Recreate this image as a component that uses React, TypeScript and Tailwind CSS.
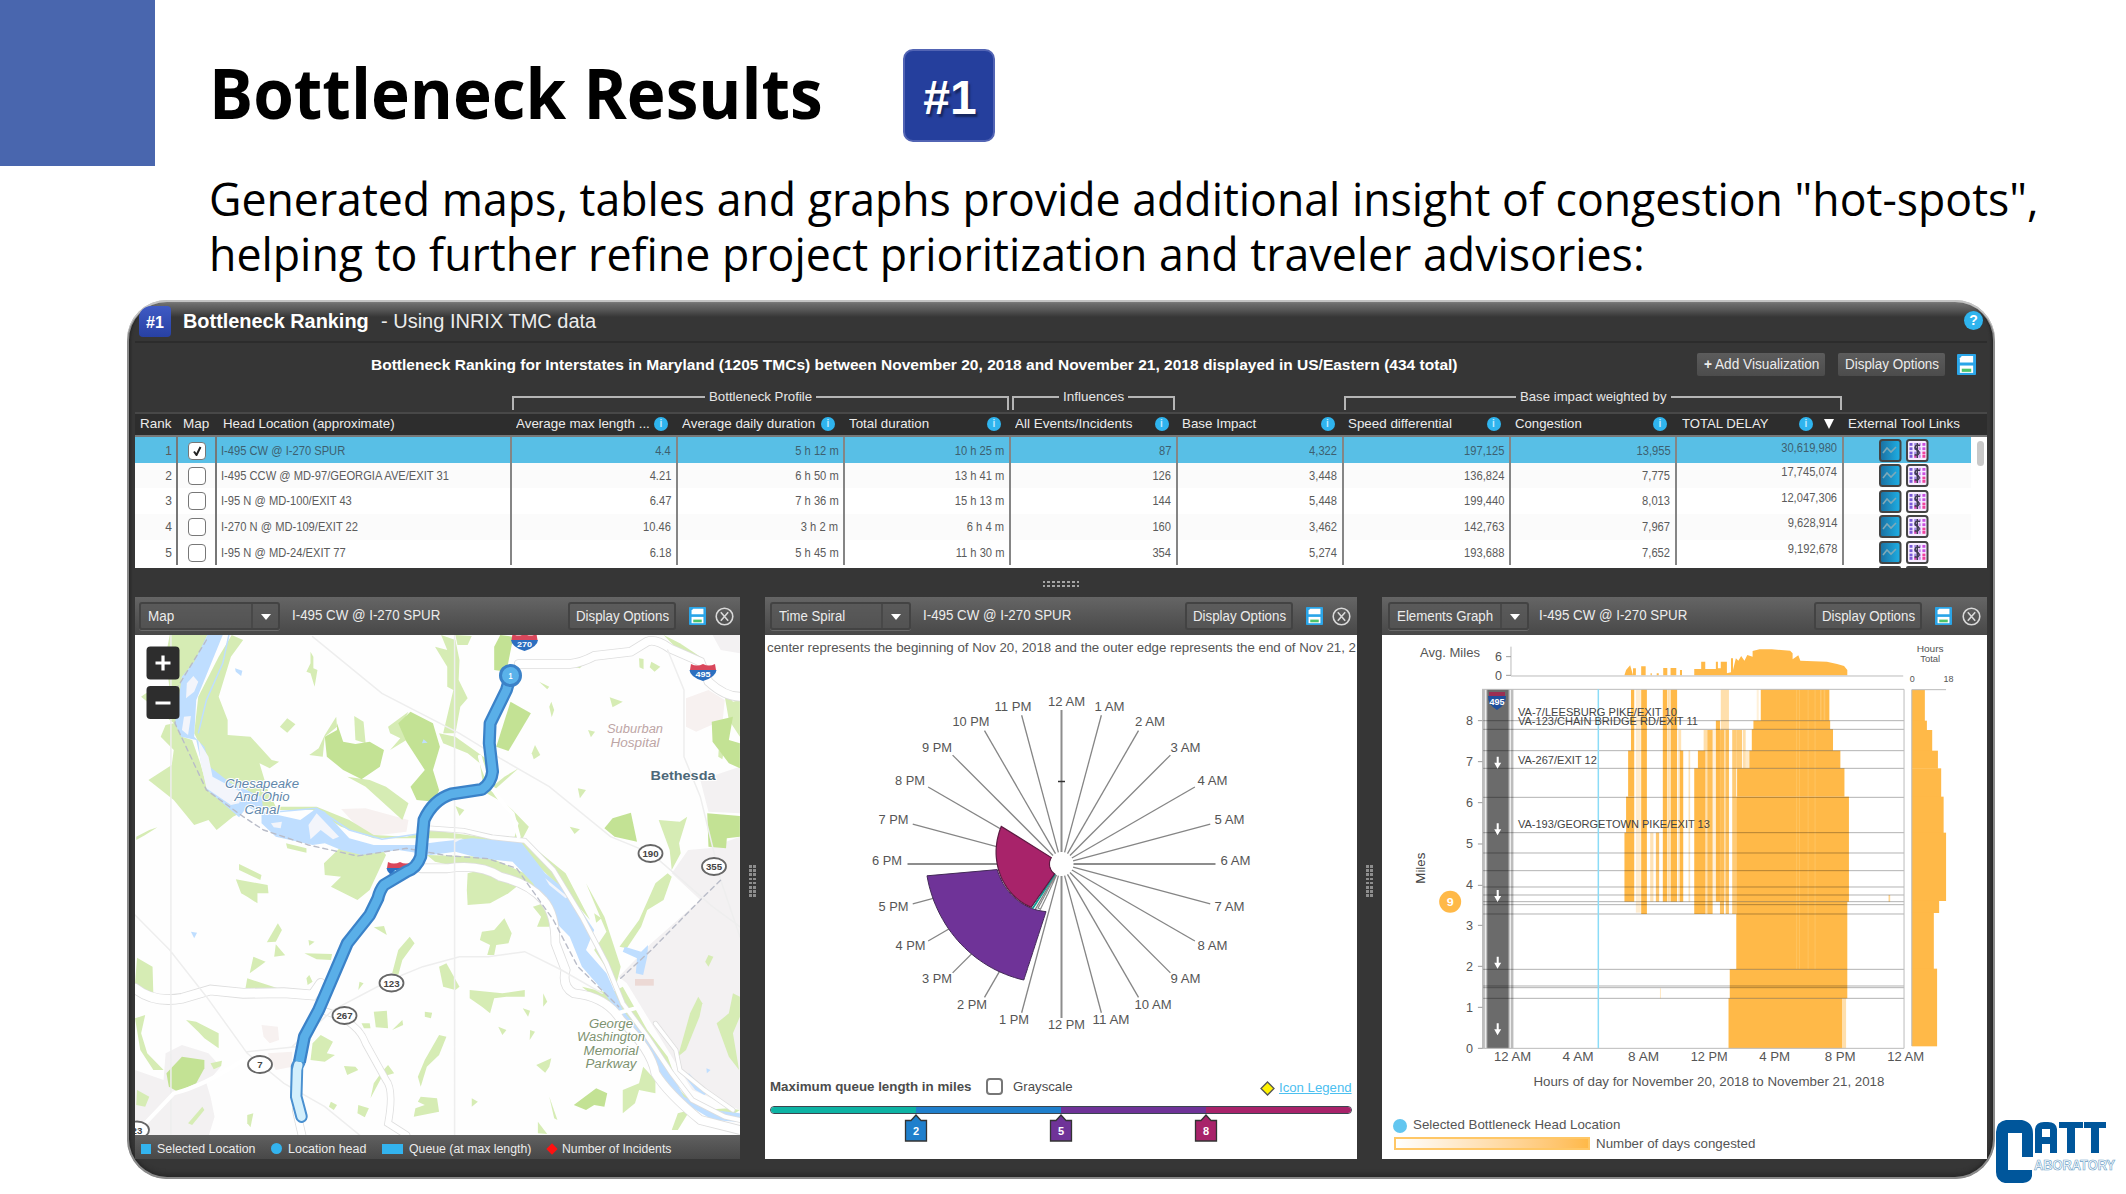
import React, { useLayoutEffect, useRef, useState } from "react";

/** Text squeezed or stretched horizontally to an exact width. */
function Fit({ w, children, className = "" }: { w: number; children: React.ReactNode; className?: string }) {
  const ref = useRef<HTMLSpanElement>(null);
  const [scale, setScale] = useState(1);
  useLayoutEffect(() => {
    if (ref.current) setScale(w / ref.current.offsetWidth);
  }, [w]);
  return (
    <span className={"block shrink-0 text-left " + className} style={{ width: w }}>
      <span ref={ref} className="inline-block origin-left whitespace-nowrap" style={{ transform: `scaleX(${scale})` }}>
        {children}
      </span>
    </span>
  );
}

const Info = ({ className = "" }: { className?: string }) => (
  <span className={"flex h-[14px] w-[14px] shrink-0 items-center justify-center rounded-full bg-[#2fb4ee] text-[10px] font-bold leading-none text-[#bfeaff] " + className}>i</span>
);

const DocIcon = ({ className }: { className: string }) => (
  <svg className={className} viewBox="0 0 20 20" preserveAspectRatio="none">
    <rect width="20" height="20" rx="1" fill="#2aa5e8" />
    <path d="M5 2H17V8H3V4Z" fill="#fff" />
    <rect x="3" y="11" width="14" height="7" fill="#fff" />
    <rect x="5" y="14" width="10" height="3" fill="#4cc46a" />
  </svg>
);

const CloseIcon = () => (
  <svg className="h-[19px] w-[19px]" viewBox="0 0 19 19" fill="none" stroke="#d8d8d8" strokeWidth="1.6">
    <circle cx="9.5" cy="9.5" r="8.3" />
    <path d="M5.8 5.2L13.2 13.8M13.2 5.2L5.8 13.8" />
  </svg>
);

const GRID = "grid grid-cols-[43px_38.5px_295px_166px_167.5px_166px_166.5px_166px_167px_166.5px_166.5px_127px_17px]";

const HEADS: [string, number, number][] = [
  ["Average max length ...", 134, 9.5],
  ["Average daily duration", 133, 10],
  ["Total duration", 80, 10],
  ["All Events/Incidents", 117, 9],
  ["Base Impact", 74, 9],
  ["Speed differential", 104, 10],
  ["Congestion", 67, 10],
];

const ROWS = [
  ["1", "I-495 CW @ I-270 SPUR", "4.4", "5 h 12 m", "10 h 25 m", "87", "4,322", "197,125", "13,955", "30,619,980"],
  ["2", "I-495 CCW @ MD-97/GEORGIA AVE/EXIT 31", "4.21", "6 h 50 m", "13 h 41 m", "126", "3,448", "136,824", "7,775", "17,745,074"],
  ["3", "I-95 N @ MD-100/EXIT 43", "6.47", "7 h 36 m", "15 h 13 m", "144", "5,448", "199,440", "8,013", "12,047,306"],
  ["4", "I-270 N @ MD-109/EXIT 22", "10.46", "3 h 2 m", "6 h 4 m", "160", "3,462", "142,763", "7,967", "9,628,914"],
  ["5", "I-95 N @ MD-24/EXIT 77", "6.18", "5 h 45 m", "11 h 30 m", "354", "5,274", "193,688", "7,652", "9,192,678"],
];

const ToolIcons = () => (
  <svg className="h-[23px] w-[50px]" viewBox="0 0 50 23">
    <defs>
      <linearGradient id="tb" x1="0" x2="1"><stop offset="0" stopColor="#1b6fa0" /><stop offset="1" stopColor="#1eb0e6" /></linearGradient>
    </defs>
    <rect x="1" y="1" width="20.5" height="21" rx="2.5" fill="url(#tb)" stroke="#444" strokeWidth="2" />
    <path d="M4 14L8 9L12 13L17 8" fill="none" stroke="#7fa9b8" strokeWidth="1.6" />
    <rect x="28" y="1" width="20.5" height="21" rx="2.5" fill="#f6ecff" stroke="#444" strokeWidth="2" />
    {[4, 8.3, 12.6, 16].map((y, i) => (
      <g key={y}>
        <rect x="30.5" y={y} width="3" height="2.8" fill="#7a5ad8" />
        <rect x="35.2" y={y} width="2.4" height="2.8" fill={i > 2 ? "#d23bb0" : "#a38be8"} />
        <rect x="39.6" y={y} width="2.2" height="2.8" fill="#c78bf0" />
        <rect x="43.4" y={y} width="3" height="2.8" fill={i > 1 ? "#f0429e" : "#c94fe0"} />
      </g>
    ))}
    <path d="M41 6.5C36 4.5 34.5 9 38 11C42 13 40 17.5 35.5 15.5M38.3 4V19" fill="none" stroke="#3f3a52" strokeWidth="1.5" />
  </svg>
);

function Group({ width, label, lw, className }: { width: string; label: string; lw: number; className: string }) {
  return (
    <div className={"flex h-[15px] items-start " + width + " " + className}>
      <span className="mt-[7px] h-[14px] flex-1 border-l-2 border-t-2 border-[#b5b5b5]" />
      <Fit w={lw} className="mx-[4px] text-[13px] leading-[15px] text-[#e6e6e6]">{label}</Fit>
      <span className="mt-[7px] h-[14px] flex-1 border-r-2 border-t-2 border-[#b5b5b5]" />
    </div>
  );
}

function PanelHead({ name, nw, box, arrow, tgap, btnGap, iconGap }: { name: string; nw: number; box: string; arrow: string; tgap: string; btnGap: string; iconGap: string }) {
  return (
    <div className="flex h-[38px] shrink-0 items-center bg-gradient-to-b from-[#656565] to-[#484848] pr-[6px] text-[14px] text-[#ececec]">
      <div className={"flex h-[28px] rounded-[3px] border-2 border-[#434343] bg-[#575757]/60 shadow-[0_1px_0_#6a6a6a] " + box}>
        <div className="flex flex-1 items-center pl-[7px]"><Fit w={nw} className="leading-[18px]">{name}</Fit></div>
        <div className={"flex items-center justify-center border-l-2 border-[#484848] " + arrow}>
          <span className="mt-0.5 border-x-[5.5px] border-t-[6px] border-x-transparent border-t-white" />
        </div>
      </div>
      <Fit w={148.5} className={"-mt-[2px] leading-[18px] " + tgap}>I-495 CW @ I-270 SPUR</Fit>
      <div className={"ml-auto flex h-[28px] w-[108px] items-center justify-center rounded-[3px] border-2 border-[#434343] bg-[#5a5a5a]/60 " + btnGap}>
        <Fit w={93} className="leading-[18px]">Display Options</Fit>
      </div>
      <DocIcon className={"h-[18px] w-[17px] " + iconGap} />
      <CloseIcon />
    </div>
  );
}

const Grip = () => (
  <div className="mt-[6px] grid grid-cols-2 gap-[1.5px]">
    {Array.from({ length: 16 }, (_, i) => <span key={i} className="h-[2.7px] w-[2.7px] bg-[#8d8d8d]" />)}
  </div>
);

/** Width-fitted svg label. */
const T = ({ x, y, w, s = 12, a = "start", c = "#444", i = false, b = false, children }: { x: number; y: number; w: number; s?: number; a?: "start" | "middle" | "end"; c?: string; i?: boolean; b?: boolean; children: string }) => (
  <text x={x} y={y} textLength={w} lengthAdjust="spacingAndGlyphs" fontSize={s} textAnchor={a} fill={c} fontStyle={i ? "italic" : "normal"} fontWeight={b ? 700 : 400}>{children}</text>
);

const LIGHT = [
  "M120 135L212 135L185 215L150 260L140 400L150 440L175 450L195 520L212 595L250 630L300 665L275 680L235 720L215 690L180 705L130 630L68 570L125 525L130 480L98 440L110 405L130 400L50 320L62 310L120 300L110 200Z",
  "M272 135L300 150L270 200L240 320L262 390L262 435L318 440L370 510L388 515L365 535L340 520L350 560L360 600L380 650L480 650L560 690L620 735L700 740L760 720L880 740L965 740L975 700L940 640L890 605L880 520L850 490L790 460L780 430L820 440L900 510L905 600L960 660L1000 710L985 745L1040 800L1090 850L1150 990L1100 920L1000 800L960 755L800 745L620 745L540 710L470 660L345 660L310 600L230 560L200 480L180 430L190 320L240 200Z",
  "M785 135L800 180L770 170L800 230L800 290L815 300L790 430L820 430L832 350L850 325L828 270L830 210L820 150Z",
  "M820 135L860 138L850 165L825 165Z",
  "M465 185L472 200L472 235L482 240L475 290L465 250L455 245L465 220Z",
  "M408 385L428 403L408 428L390 410Z",
  "M528 380L530 410L500 440L495 500L462 495L485 475L500 435Z",
  "M572 378L595 395L600 460L575 450Z",
  "M705 365L655 410L660 430L685 445L660 480L700 450L690 400Z",
  "M555 560L600 590L690 690L705 640L650 590L610 570Z",
  "M1015 465L1028 495L1012 508L1007 490Z", "M1055 335L1062 360L1056 382L1050 350Z",
  "M1300 215L1322 230L1308 245L1296 232Z", "M1270 205L1281 207L1281 238L1271 232Z", "M1198 322L1230 335L1205 352Z",
  "M1118 220L1132 225L1125 235L1112 232Z", "M1025 275L1050 290L1045 298Z", "M1145 420L1162 425L1152 442Z",
  "M975 535L940 560L910 590L920 595Z", "M1120 595L1140 600L1125 625Z", "M1100 710L1125 718L1112 732Z", "M820 648L842 660L830 678Z",
  "M1330 135L1370 160L1420 200L1420 230L1390 210Z", "M1440 270L1480 300L1500 335L1517 330L1517 440L1490 390L1480 320Z",
  "M1465 480L1477 490L1474 508L1464 500Z", "M1318 690L1370 695L1388 680L1368 760L1372 790L1350 840L1345 780Z",
  "M1340 850L1310 880L1270 990L1240 1040L1222 1070L1240 1075L1275 1010L1290 960L1330 930L1350 860Z",
  "M540 770L640 780L650 795L610 900L580 930L515 890L540 860L500 855L498 820Z",
  "M405 760L455 775L455 788L408 775Z", "M290 822L345 855L342 870L290 840Z", "M282 868L360 885L362 910L335 910L335 940L310 920L295 910Z",
  "M750 795L900 800L990 850L1060 930L1120 990L1130 1005L1075 990L1010 900L900 850L770 815Z",
  "M850 850L900 835L985 875L950 910L905 940L850 945L848 900Z", "M1010 950L1060 930L1050 1010L1020 1010L1030 980Z",
  "M940 985L958 1030L950 1060L920 1065L915 1095L898 1095L905 1065L880 1050L885 1025L915 1020Z",
  "M708 1040L720 1060L690 1110L680 1155L665 1150L680 1080Z",
  "M385 1000L395 1020L380 1055L358 1057Z", "M380 1063L403 1096L376 1100Z", "M325 1100L355 1115L316 1150Z",
  "M450 1090L518 1092L515 1110L480 1108Z", "M620 1012L645 1008L652 1035Z", "M460 1050L475 1055L462 1067Z", "M462 1155L470 1175L458 1185L455 1165Z",
  "M40 1103L78 1130L80 1215L48 1190L35 1180Z", "M310 1165L385 1195L305 1200Z",
  "M160 1290L185 1295L240 1330L240 1375L205 1345L190 1325Z", "M35 1285L60 1275L50 1330L65 1390L105 1440L80 1440L48 1380Z",
  "M220 1420L248 1412L246 1428L228 1438Z", "M490 1335L520 1355L505 1390L525 1395L500 1415L465 1410L470 1360Z",
  "M620 1265L652 1262L655 1315L625 1312Z", "M690 1290L692 1305L665 1320Z", "M590 1300L610 1300L612 1315L596 1315Z", "M585 1175L595 1180L582 1200Z",
  "M798 1120L830 1190L820 1200L790 1190L780 1130Z", "M855 1200L935 1210L990 1200L990 1220L945 1220L915 1225L905 1270L885 1250L855 1225Z",
  "M1035 1210L1045 1235L1035 1250Z", "M925 1310L945 1320L935 1335Z", "M985 1255L1003 1262L998 1280Z", "M1003 1320L1015 1325L1002 1350Z", "M745 1265L763 1268L760 1285L745 1280Z",
  "M780 1335L798 1340L780 1395L750 1430L735 1490L728 1460L745 1410Z", "M1055 1405L1050 1430L1040 1448L1018 1425Z",
  "M655 1425L670 1450L640 1460L612 1525L620 1480L640 1445Z", "M735 1520L775 1525L780 1565L718 1580L722 1555L745 1545L728 1535Z",
  "M575 1430L582 1440L555 1455L547 1428Z", "M582 1545L608 1555L598 1582L580 1570Z", "M515 1535L530 1545L522 1560L510 1550Z", "M860 1525L875 1535L860 1550Z",
  "M200 1550L205 1560L175 1605L165 1600Z", "M40 1500L70 1520L60 1550L38 1545Z", "M310 1575L325 1570L318 1612L310 1600Z",
  "M1130 1190L1200 1210L1220 1260L1180 1240Z", "M1230 1190L1290 1320L1340 1400L1370 1500L1420 1560L1490 1555L1517 1560L1480 1590L1410 1560L1350 1500L1320 1380L1240 1300L1200 1210Z",
  "M1280 1430L1310 1470L1310 1510L1270 1500L1260 1540L1230 1570L1230 1500L1270 1480Z",
  "M1415 1220L1425 1240L1418 1280L1385 1380L1365 1400L1395 1270Z", "M1500 1210L1517 1220L1517 1280L1500 1330L1515 1440L1490 1400L1460 1300L1490 1270Z", "M1440 1095L1452 1100L1440 1130L1432 1115Z",
  "M1022 1595L1045 1632L1022 1630Z", "M1365 1570L1395 1560L1365 1620L1350 1620Z", "M1050 1520L1070 1590L1062 1585Z", "M1190 1025L1140 880L1185 980L1225 1130L1215 1180L1160 1080Z", "M1160 970L1178 985L1165 998Z",
  "M38 740L70 720L90 712L60 735L38 750Z",
];
const MID = [
  "M930 135L962 140L945 245L915 240L915 170Z", "M955 335L1005 370L950 483L920 470Z",
  "M530 400L545 455L575 462L610 455L645 480L635 530L590 568L545 540L505 500L500 440L530 420Z",
  "M710 365L765 400L782 470L765 540L780 600L770 635L725 630L710 590L745 540L700 455L680 400Z",
  "M1250 668L1265 755L1210 740L1185 715L1205 685Z", "M1448 395L1500 380L1490 450L1517 460L1517 535L1490 520L1450 455Z", "M1437 670L1517 678L1517 740L1485 745L1483 775L1440 770Z",
  "M150 1400L205 1410L205 1435L185 1480L140 1505L118 1490L112 1450Z", "M1165 1495L1192 1510L1185 1550L1160 1545L1140 1560L1110 1545Z",
];
const BLUE_BITS = ["M280 235L298 242L295 258L282 245Z", "M742 448L752 458L738 460Z", "M172 1025L187 1028L180 1045Z", "M1235 1070L1275 1085L1292 1065L1290 1100L1280 1155L1262 1150L1265 1105L1230 1085Z", "M1392 1450L1438 1510L1430 1515L1408 1500L1385 1465Z", "M1435 1435L1445 1440L1436 1450Z"];

const Shield = ({ x, y, n }: { x: number; y: number; n: string }) => (
  <g transform={`translate(${x} ${y})`}>
    <path d="M-12 -8Q-6 -5 0 -8Q6 -5 12 -8L13 -2H-13Z" fill="#d9475b" />
    <path d="M-13.500 -2H13.500Q13 5 0 9Q-13 5 -13.500 -2Z" fill="#2c6fc0" />
    <T x={0} y={5} w={15} s={8} a="middle" c="#fff" b>{n}</T>
  </g>
);
const Pill = ({ x, y, n }: { x: number; y: number; n: string }) => (
  <g>
    <ellipse cx={x} cy={y} rx={12} ry={8.5} fill="#fff" stroke="#666" strokeWidth="1.8" />
    <T x={x} y={y + 3.5} w={n.length * 5.4} s={9.5} a="middle" c="#444" b>{n}</T>
  </g>
);

const ROUTE = "M955 257L945 300L905 400L903 460L911 545Q908 580 885 598L810 612Q765 630 743 690L735 800Q725 835 700 845L645 885Q635 900 630 925L610 975L555 1060L485 1260L450 1340L438 1415";

function MapView() {
  return (
    <svg className="block h-[500px] w-[605px] bg-[#fefefe]" viewBox="0 0 605 500">
      <g transform="scale(.40816 .33333) translate(-35 -135)">
        <path d="M1450 135H1517V190L1470 180ZM1420 570L1517 530V670L1440 665ZM1350 850L1390 780L1440 775L1517 740V1560L1400 1500L1330 1360L1240 1180L1220 1160L1300 1060L1420 930ZM35 1440L105 1470L110 1390L150 1365L215 1390L245 1430L210 1480L220 1520L230 1580L215 1640H35Z" fill="#f3f1f2" />
        <path d="M1385 325L1440 300L1480 330L1475 390L1410 425L1385 410ZM540 657L600 655L705 690L700 725L620 737L580 710ZM345 1305L385 1310L388 1350L365 1360L350 1340ZM360 1390L420 1385L420 1430L380 1440Z" fill="#f7f1f0" />
        <path d="M1260 1167H1306V1187H1260Z" fill="#ecd9d5" />
        {LIGHT.map((d) => <path key={d} d={d} fill="#d6ecb4" />)}
        {MID.map((d) => <path key={d} d={d} fill="#c3e294" />)}
        <path d="M212 135L250 135L215 240L185 330L180 440L205 470L218 530L270 580L345 620L350 665L440 690L480 655L500 665L560 745L620 765L720 765L780 755L860 745L980 755L1040 850L1100 910L1160 1020L1140 1080L1190 1150L1230 1260L1290 1350L1340 1430L1380 1520L1450 1560L1517 1570L1517 1596L1450 1590L1370 1530L1320 1470L1300 1390L1225 1280L1180 1200L1130 1130L1100 1040L1060 990L1010 880L960 815L880 805L820 785L760 795L680 780L590 795L540 780L500 760L470 765L380 740L345 700L345 672L310 650L290 682L212 600L185 450L148 440L133 400L150 260L180 215Z" fill="#bfdeff" />
        {BLUE_BITS.map((d) => <path key={d} d={d} fill="#bfdeff" />)}
        <path d="M178 258L190 275L180 305L160 325L162 280ZM155 380L172 378L165 435L150 420ZM190 450L215 500L225 560L300 610L290 640L270 645L210 595L195 510ZM480 670L535 740L520 748L490 720L465 748L460 705ZM368 700L395 695L392 715L375 712ZM815 748L838 745L820 757ZM1040 865L1095 920L1090 925L1050 885Z" fill="#f3f5fb" />
        <path d="M265 135L250 220L210 330L190 430M385 665L480 655L560 720L640 748L740 730" fill="none" stroke="#bfdeff" strokeWidth="1.5" vectorEffect="non-scaling-stroke" />
        <g fill="none" strokeLinecap="round">
          {[
            ["M975 222H1100Q1130 218 1160 198L1250 185L1290 155Q1310 145 1345 175L1420 215L1440 275Q1480 320 1517 320", 8],
            ["M755 715L840 722L910 742L990 752L1060 840L1130 980L1190 1120L1230 1240L1290 1340L1350 1450L1400 1530L1480 1580L1517 1590", 4],
            ["M735 835L800 835Q880 820 930 860Q1000 880 1035 930Q1065 970 1065 1060L1090 1140Q1080 1190 1110 1210Q1190 1220 1225 1290Q1300 1380 1310 1450Q1340 1510 1420 1590L1517 1620", 8],
            ["M35 1195Q80 1240 150 1225L220 1200L300 1210L400 1208L470 1215L490 1180", 9],
            ["M490 1260Q580 1290 600 1360L650 1470Q670 1500 655 1600L700 1635", 6],
            ["M430 1560L445 1640", 7], ["M1310 1300L1360 1380L1370 1440L1430 1500L1500 1560", 3.5],
          ].map(([d, w]) => (
            <g key={d as string}>
              <path d={d as string} stroke="#dedede" strokeWidth={(w as number) + 1.6} vectorEffect="non-scaling-stroke" />
              <path d={d as string} stroke="#fff" strokeWidth={w as number} vectorEffect="non-scaling-stroke" />
            </g>
          ))}
          <path d="M470 140L640 310L830 430L930 505L1050 590L1200 740L1300 790L1450 950L1517 1010M1340 180L1380 300L1380 500L1420 620L1470 870L1517 1040M35 975L120 1080L210 1220L310 1390L400 1480L500 1550L590 1640M420 1370L520 1260L660 1170L740 1130L830 1100H900L990 1085L1080 1140L1180 1210M310 1385L430 1370M123 135V1634M818 135V1634" stroke="#eeeeee" strokeWidth="1.5" vectorEffect="non-scaling-stroke" />
          <path d="M60 1600L130 1510Q200 1490 300 1410M880 500Q900 600 960 670L975 740M1215 1270L1260 1255" stroke="#fff" strokeWidth="4" vectorEffect="non-scaling-stroke" />
          <path d="M210 150L140 290L133 400L210 600L300 680L350 720L460 765L580 798L700 775L800 797L900 806L970 835L1060 990L1120 1130L1220 1250M1225 1165L1300 1080L1420 930L1470 870" stroke="#b9bcc8" strokeWidth="1.4" strokeDasharray="5 4" vectorEffect="non-scaling-stroke" />
        </g>
      </g>
      <Shield x={389.5} y={7} n="270" />
      <Shield x={568} y={37} n="495" />
      <Shield x={265} y={235} n="495" />
      <g transform="scale(.40816 .33333) translate(-35 -135)" fill="none" strokeLinecap="round" strokeLinejoin="round">
        <path d="M438 1415L432 1430L430 1520L443 1580" stroke="#4a90d0" strokeWidth="12.5" vectorEffect="non-scaling-stroke" />
        <path d="M435 1425L432 1440L430 1520L443 1580" stroke="#d3effc" strokeWidth="8.500" vectorEffect="non-scaling-stroke" />
        <path d={ROUTE} stroke="#3b82c8" strokeWidth="13" strokeLinecap="butt" vectorEffect="non-scaling-stroke" />
        <path d={ROUTE} stroke="#5aafe8" strokeWidth="8.500" strokeLinecap="butt" vectorEffect="non-scaling-stroke" />
      </g>
      <circle cx="375.500" cy="40.500" r="10" fill="#5ab2ea" stroke="#3b82c8" strokeWidth="3" />
      <T x={375.5} y={44} w={4} s={9} a="middle" c="#fff" b>1</T>
      <Pill x={515.5} y={218.5} n="190" />
      <Pill x={579} y={231.5} n="355" />
      <Pill x={256.5} y={348} n="123" />
      <Pill x={209.5} y={380.5} n="267" />
      <Pill x={125} y={429.5} n="7" />
      <Pill x={2} y={495} n="23" />
      <g stroke="#fff" strokeWidth="2" paintOrder="stroke">
        <T x={127} y={153} w={74} a="middle" c="#6187ab" i>Chesapeake</T>
        <T x={127} y={166} w={55} a="middle" c="#6187ab" i>And Ohio</T>
        <T x={127} y={179} w={35} a="middle" c="#6187ab" i>Canal</T>
        <T x={500} y={98} w={56} a="middle" c="#bda5a5" i>Suburban</T>
        <T x={500} y={112} w={49} a="middle" c="#bda5a5" i>Hospital</T>
        <T x={548} y={145} w={65} s={13} a="middle" c="#4d6878" b>Bethesda</T>
        <T x={476} y={393} w={44} a="middle" c="#7d9270" i>George</T>
        <T x={476} y={406} w={68} a="middle" c="#7d9270" i>Washington</T>
        <T x={476} y={420} w={55} a="middle" c="#7d9270" i>Memorial</T>
        <T x={476} y={433} w={51} a="middle" c="#7d9270" i>Parkway</T>
      </g>
      <g fill="#2d2d2d"><rect x="11.500" y="11.500" width="33" height="33" rx="4" /><rect x="11.500" y="51" width="33" height="33" rx="4" /></g>
      <path d="M20.500 28H35.500M28 20.500V35.500M20.500 68H35.500" stroke="#fff" strokeWidth="3.2" />
    </svg>
  );
}

const pt = (r: number, deg: number) => {
  const a = (deg * Math.PI) / 180;
  return [296.5 + r * Math.sin(a), 229 - r * Math.cos(a)];
};
const arc = (r0: number, a0: number, r1: number, a1: number) =>
  Array.from({ length: 31 }, (_, k) => pt(r0 + ((r1 - r0) * k) / 30, a0 + ((a1 - a0) * k) / 30).map((n) => n.toFixed(1)).join(" ")).join("L");

const HOURS: [string, number, number][] = [
  ["12 AM", 301.5, 70.5], ["1 AM", 344.5, 75.5], ["2 AM", 385, 91], ["3 AM", 420.5, 116.5], ["4 AM", 447.5, 150], ["5 AM", 464.5, 189], ["6 AM", 470.5, 230],
  ["7 AM", 464.5, 275.5], ["8 AM", 447.5, 314.5], ["9 AM", 420.5, 348], ["10 AM", 388, 373.5], ["11 AM", 346, 389], ["12 PM", 301.5, 394],
  ["1 PM", 249, 389], ["2 PM", 207, 373.5], ["3 PM", 172, 348], ["4 PM", 145.5, 314.5], ["5 PM", 128.5, 275.5], ["6 PM", 122, 230],
  ["7 PM", 128.5, 189], ["8 PM", 145, 150], ["9 PM", 172, 116.5], ["10 PM", 206, 91], ["11 PM", 248, 75.5],
];

function Spiral() {
  return (
    <svg className="block h-[425px] w-[592px]" viewBox="0 0 592 425">
      <T x={2} y={17} w={589} s={13} c="#555">center represents the beginning of Nov 20, 2018 and the outer edge represents the end of Nov 21, 2</T>
      {HOURS.map(([h], k) => {
        const [x1, y1] = pt(12, k * 15);
        const [x2, y2] = pt(154, k * 15);
        return <line key={h} x1={x1} y1={y1} x2={x2} y2={y2} stroke={k % 6 === 0 ? "#8d8d8d" : "#858585"} strokeWidth={k % 6 === 0 ? 2 : 1.3} />;
      })}
      <path d="M293 146.500H300" stroke="#333" strokeWidth="1.5" />
      <path d={`M${arc(50, 198, 122, 198)}L${arc(122, 198, 135, 265)}L${arc(64.5, 265, 50, 198)}Z`} fill="#6f3398" stroke="#432a58" strokeWidth="1" />
      <path d={`M${arc(12, 204, 50, 205)}L${arc(50, 208, 12, 208)}`} fill="none" stroke="#888" strokeWidth="1.2" />
      <path d={`M${arc(12, 213, 53, 213)}`} fill="none" stroke="#0f9d94" strokeWidth="1.8" />
      <path d={`M${arc(12, 215, 52.8, 215)}L${arc(52.8, 215, 71, 302)}L${arc(12, 302, 12, 215)}Z`} fill="#a8236a" stroke="#5c1a42" strokeWidth="1.2" />
      <circle cx="296.5" cy="229" r="11" fill="#fff" />
      {HOURS.map(([h, x, y]) => (
        <T key={h} x={x} y={y} w={h.length > 4 ? 37 : 30} s={12.5} a="middle" c="#555">{h}</T>
      ))}
    </svg>
  );
}

const S: [number, number, number, number, number][] = [
  [640, 648, 298, 482, 1], [633, 648, 482, 620, 1], [628, 648, 620, 728, 1], [624, 648, 728, 935, 1],
  [652, 664, 298, 968, 0.25], [665, 679, 298, 972, 1], [687, 695, 728, 935, 0.4], [701, 709, 728, 935, 0.8], [718, 729, 298, 935, 1], [731, 735, 298, 935, 0.5], [737, 753, 298, 935, 1],
  [756, 763, 420, 935, 0.4], [760, 768, 482, 935, 1], [781, 785, 482, 935, 0.4],
  [804, 822, 482, 535, 1], [795, 822, 535, 972, 1], [818, 827, 420, 972, 0.45], [827, 840, 420, 972, 0.9], [840, 848, 420, 935, 0.2], [848, 858, 392, 935, 1],
  [860, 880, 298, 935, 0.45], [858, 868, 420, 972, 0.85], [872, 880, 420, 972, 0.8], [888, 898, 420, 972, 0.75], [898, 912, 420, 535, 0.75], [914, 921, 420, 535, 0.45], [921, 930, 482, 535, 0.3], [948, 953, 298, 392, 0.2],
  [958, 1126, 298, 392, 1], [940, 1128, 392, 418, 1], [936, 1135, 418, 482, 1], [930, 1153, 482, 535, 1], [900, 1163, 535, 620, 1], [898, 1174, 620, 935, 1], [898, 1170, 935, 1138, 1],
  [882, 1170, 1138, 1225, 1], [879, 1157, 1225, 1375, 1], [1157, 1167, 1225, 1375, 0.45], [1271, 1275, 915, 935, 0.6], [711, 713, 1195, 1225, 0.4],
];
const HL = [392, 418, 482, 535, 622, 728, 789, 842, 891, 915, 935, 944, 972, 1138, 1188, 1193, 1225];
const HOUR_BARS: [number, number, number][] = [[300, 392, 1360], [392, 420, 1365], [420, 482, 1378], [482, 535, 1392], [535, 620, 1400], [620, 728, 1406], [728, 932, 1412], [932, 968, 1395], [968, 1136, 1382], [1136, 1368, 1390]];
const gx = (x: number) => (x - 30) / 2.45;
const gy = (y: number) => (y - 135) / 3;

function Elements() {
  return (
    <svg className="block h-[466px] w-[605px]" viewBox="0 0 605 466">
      <g transform="scale(.40816 .33333) translate(-30 -135)">
        <path d="M624 256L628 240L638 226L645 256ZM645 256V235H652V256ZM665 256V229H676V256ZM688 256V250H691V256ZM703 256V250H708V256ZM719 256V234H729V256ZM737 256V234H751V256ZM760 256V240H765V256ZM795 256V237H812V215H822V237H848V215H853V235H860V215H875V250L885 247V205H890V240L897 205L903 212L910 198L918 212L925 195L938 200V183L955 178H985L1030 182L1036 190V208L1050 196L1055 212L1120 215L1145 222L1162 228L1170 240V256Z" fill="#ffb948" />
        {S.map(([a, b, c, d, o], k) => <rect key={k} x={a} y={c} width={b - a} height={d - c} fill="#ffb948" opacity={o} />)}
        {[1045, 1052, 1073, 1090, 1103, 1112].map((x) => <rect key={x} x={x} y={298} width={x > 1100 ? 4 : 2} height={x > 1100 ? 94 : 840} fill="#ffd489" opacity=".45" />)}
        {HOUR_BARS.map(([a, b, x]) => <rect key={a} x={1328} y={a} width={x - 1328} height={b - a + 1} fill="#ffb948" />)}
        <rect x="275" y="298" width="77" height="1077" fill="#bdbdbd" />
        <rect x="282" y="298" width="3" height="1077" fill="#eee" /><rect x="343" y="298" width="3" height="1077" fill="#eee" />
        <rect x="288" y="298" width="52" height="1077" fill="#6b6b6b" />
        <g fill="none" stroke="#000" strokeOpacity=".3" strokeWidth="1">
          {HL.map((y) => <path key={y} d={`M278 ${y}H1309`} vectorEffect="non-scaling-stroke" />)}
        </g>
        <path d="M275 298H1309V1375H275M346 170V256M346 258H1307M1328 299H1412M1328 299V1368" fill="none" stroke="#bbb" vectorEffect="non-scaling-stroke" />
        <path d={[392, 515, 638, 762, 886, 1006, 1129, 1252, 1375].map((y) => `M265 ${y}H276`).join("") + "M334 200H346M334 256H346"} stroke="#999" vectorEffect="non-scaling-stroke" />
        <path d="M560 298V1375" stroke="#8bdcf7" strokeWidth="1.5" vectorEffect="non-scaling-stroke" />
        {[500, 700, 900, 1100, 1300].map((y) => <path key={y} d={`M311 ${y}H316V${y + 18}H322L313 ${y + 36}L305 ${y + 18}H311Z`} fill="#fff" />)}
      </g>
      <g transform="translate(115 65)">
        <path d="M-8 -8H8V-4H-8Z" fill="#9b2f52" /><path d="M-9 -4H9Q9 5 0 10Q-9 5 -9 -4Z" fill="#1f4f9c" />
        <T x={0} y={5} w={15} s={8.5} a="middle" c="#fff" b>495</T>
      </g>
      <T x={gx(123)} y={22} w={60} s={12.5} c="#555">Avg. Miles</T>
      <T x={gx(324)} y={26} w={7} a="end" c="#555">6</T>
      <T x={gx(324)} y={45} w={7} a="end" c="#555">0</T>
      <T x={gx(1373)} y={16.5} w={27} s={9.5} a="middle" c="#555">Hours</T>
      <T x={gx(1373)} y={26.5} w={20} s={9.5} a="middle" c="#555">Total</T>
      <T x={gx(1329)} y={46.5} w={5} s={9.5} a="middle" c="#555">0</T>
      <T x={gx(1418)} y={46.5} w={10} s={9.5} a="middle" c="#555">18</T>
      {[8, 7, 6, 5, 4, 3, 2, 1, 0].map((n, k) => <T key={n} x={gx(253)} y={gy(405 + k * 123)} w={7} s={12.5} a="end" c="#555">{String(n)}</T>)}
      <T x={gx(363)} y={gy(378)} w={159} s={10.5}>VA-7/LEESBURG PIKE/EXIT 10</T>
      <T x={gx(363)} y={gy(404)} w={180} s={10.5}>VA-123/CHAIN BRIDGE RD/EXIT 11</T>
      <T x={gx(363)} y={gy(522)} w={79} s={10.5}>VA-267/EXIT 12</T>
      <T x={gx(363)} y={gy(715)} w={192} s={10.5}>VA-193/GEORGETOWN PIKE/EXIT 13</T>
      <g transform={`translate(${gx(136)} ${gy(881)}) rotate(-90)`}><T x={0} y={0} w={31} s={12.5}>Miles</T></g>
      <circle cx={gx(197)} cy={gy(935)} r="11" fill="#ffb948" />
      <T x={gx(197)} y={gy(935) + 4} w={7} s={11} a="middle" c="#fff" b>9</T>
      {["12 AM", "4 AM", "8 AM", "12 PM", "4 PM", "8 PM", "12 AM"].map((h, k) => <T key={k} x={gx(350 + k * 160.5)} y={gy(1414)} w={h.length > 4 ? 37 : 31} s={12.5} a="middle" c="#555">{h}</T>)}
      <T x={gx(401)} y={gy(1488)} w={351} s={13} c="#555">Hours of day for November 20, 2018 to November 21, 2018</T>
    </svg>
  );
}

const Marker = ({ n, fill }: { n: string; fill: string }) => (
  <svg className="h-[28px] w-[24px]" viewBox="0 0 24 28">
    <path d="M1.500 6.500H7L12 1L17 6.500H22.500V27H1.500Z" fill={fill} stroke="#333" strokeWidth="1.3" />
    <text x="12" y="20.500" fontSize="11" fontWeight="700" fill="#fff" textAnchor="middle">{n}</text>
  </svg>
);

export default function App() {
  return (
    <div className="relative flex h-[1194px] w-[2126px] flex-col overflow-hidden bg-white font-['Liberation_Sans',Arial,sans-serif]">
      <header className="flex h-[300px] shrink-0 items-start">
        <div className="h-[166px] w-[155px] shrink-0 bg-[#4966ae]" />
        <div className="pl-[54px] font-['Open_Sans',sans-serif] text-black">
          <div className="flex h-[166px] items-start">
            <Fit w={614} className="pt-[46px] text-[70px] font-bold leading-[92px]">Bottleneck Results</Fit>
            <div className="ml-[80px] mt-[48.5px] flex h-[93px] w-[92px] items-center justify-center rounded-[10px] border-2 border-[#5264b4] bg-[#253f9d] pl-[2px] pt-[6px] font-['Liberation_Sans',sans-serif] text-[48px] font-bold text-white [text-shadow:2px_3px_2px_#16265f]">#1</div>
          </div>
          <div className="mt-[6px] text-[45px] leading-[54.5px]">
            <Fit w={1830} className="h-[54.5px]">Generated maps, tables and graphs provide additional insight of congestion "hot-spots",</Fit>
            <Fit w={1436}>helping to further refine project prioritization and traveler advisories:</Fit>
          </div>
        </div>
      </header>

      <main className="ml-[127px] flex h-[879px] w-[1868px] shrink-0 flex-col overflow-hidden rounded-[40px] bg-[#363636] bg-[linear-gradient(to_bottom,#8a8a8a_0px,#6c6c6c_4px,#5a5a5a_9px,#363636_17px)] px-[8px] shadow-[inset_0_2px_0_#c4c4c4,inset_0_0_0_2px_#8a8a8a,inset_4px_0_3px_-1px_#222,inset_-4px_0_3px_-1px_#222,inset_0_-5px_4px_#2a2a2a]">
        <div className="flex h-[43px] shrink-0 items-start border-b-2 border-[#2c2c2c] pt-[6px] text-[20px] text-white">
          <div className="ml-[4px] flex h-[31px] w-[32px] items-center justify-center rounded-[4px] rounded-tl-[12px] bg-gradient-to-b from-[#3f5ac4] to-[#2841a4] pt-[2px] text-[16px] font-bold">#1</div>
          <Fit w={186} className="ml-[12px] font-bold leading-[30px]">Bottleneck Ranking</Fit>
          <Fit w={215} className="ml-[12px] leading-[30px] text-[#ececec]">- Using INRIX TMC data</Fit>
          <div className="ml-auto mr-[4px] mt-[5px] flex h-[19px] w-[19px] items-center justify-center rounded-full bg-[#2fb4ee] text-[14px] font-bold">?</div>
        </div>

        <div className="flex h-[46px] shrink-0 items-start pt-[10px] text-[14px] text-[#ececec]">
          <Fit w={1087} className="ml-[236px] text-[15.5px] font-bold leading-[23px] text-white">Bottleneck Ranking for Interstates in Maryland (1205 TMCs) between November 20, 2018 and November 21, 2018 displayed in US/Eastern (434 total)</Fit>
          <div className="ml-auto flex h-[23px] w-[128px] items-center justify-center rounded-[2px] bg-gradient-to-b from-[#5c5c5c] to-[#4c4c4c]"><Fit w={115}><b>+</b> Add Visualization</Fit></div>
          <div className="ml-[13px] flex h-[23px] w-[107px] items-center justify-center rounded-[2px] bg-gradient-to-b from-[#5c5c5c] to-[#4c4c4c]"><Fit w={94}>Display Options</Fit></div>
          <DocIcon className="ml-[12px] mr-[11px] mt-[1px] h-[21px] w-[19px]" />
        </div>

        <div className="flex h-[23px] shrink-0 items-start">
          <Group width="w-[497px]" label="Bottleneck Profile" lw={103} className="ml-[377px]" />
          <Group width="w-[163px]" label="Influences" lw={61} className="ml-[3px]" />
          <Group width="w-[498px]" label="Base impact weighted by" lw={147} className="ml-[169px]" />
        </div>

        <div className={GRID + " h-[25px] shrink-0 items-center border-b-2 border-t-2 border-b-[#777] border-t-[#484848] bg-[#2d2d2d] pb-[2px] text-[13px] leading-[18px] text-[#ececec]"}>
          <Fit w={31} className="pl-[5px]">Rank</Fit>
          <Fit w={26} className="pl-[5px]">Map</Fit>
          <Fit w={172} className="pl-[6px]">Head Location (approximate)</Fit>
          {HEADS.map(([h, w, r]) => (
            <div key={h} className="flex items-center justify-between pl-[4px]">
              <Fit w={w}>{h}</Fit>
              <span className="flex" style={{ marginRight: r }}><Info /></span>
            </div>
          ))}
          <div className="flex items-center pl-[5px]">
            <Fit w={87}>TOTAL DELAY</Fit>
            <Info className="ml-[30px]" />
            <span className="ml-[11px] border-x-[5px] border-t-[10px] border-x-transparent border-t-white" />
          </div>
          <Fit w={112} className="pl-[4px]">External Tool Links</Fit>
        </div>

        <div className="flex h-[131px] shrink-0 flex-col overflow-hidden bg-white">
          {ROWS.map((r, k) => (
            <div key={k} className={GRID + " h-[25.7px] shrink-0 text-[12px] text-[#5b5b5b]"}>
              <div className={"flex items-center justify-end border-r-2 border-[#777] pr-[4px] " + (k === 0 ? "bg-[#58bfe6] pb-[2px]" : k % 2 ? "bg-[#fbfbfb]" : "bg-white")}>{r[0]}</div>
              <div className={"flex items-center justify-center border-r-2 border-[#777] pl-[2px] " + (k === 0 ? "bg-[#58bfe6] pb-[1px]" : k % 2 ? "bg-[#fbfbfb]" : "bg-white")}>
                <span className="flex h-[18px] w-[18px] items-center justify-center rounded-[4px] border-[1.5px] border-[#777] bg-white">
                  {k === 0 && <svg className="h-[10px] w-[10px]" viewBox="0 0 10 10"><path d="M2 5.500L4.500 9L8.500 1" fill="none" stroke="#222" strokeWidth="2" /></svg>}
                </span>
              </div>
              {r.slice(1).map((v, j) => (
                <div key={j} className={"flex items-center border-r-2 border-[#858585] " + (j === 0 ? "pl-[4px] " : "justify-end pr-[4.5px] ") + (k === 0 ? "bg-[#58bfe6] text-[#3d5f70] " : k % 2 ? "bg-[#fbfbfb] " : "bg-white ") + (j === 8 ? "pb-[7px]" : k === 0 ? "pb-[2px]" : "")}>
                  <span className={"whitespace-nowrap " + (j === 0 ? "origin-left scale-x-[.93]" : "origin-right scale-x-[.93]")}>{v}</span>
                </div>
              ))}
              <div className={"flex items-center pl-[35px] " + (k === 0 ? "bg-[#58bfe6] pb-[2px]" : k % 2 ? "bg-[#fbfbfb]" : "bg-white")}><ToolIcons /></div>
              <div className="pl-[6px] pt-[4px]">{k === 0 && <div className="h-[25px] w-[7px] rounded-full bg-[#c9c9c9]" />}</div>
            </div>
          ))}
          <div className="flex flex-1 items-end gap-[5px] pl-[1744px]">
            <span className="h-[2px] w-[22px] rounded-t bg-[#444]" />
            <span className="h-[2px] w-[22px] rounded-t bg-[#444]" />
          </div>
        </div>

        <div className="flex h-[29px] shrink-0 items-center justify-center pt-[3px]">
          <div className="grid grid-cols-8 gap-x-[2.2px] gap-y-[1.5px]">
            {Array.from({ length: 16 }, (_, i) => <span key={i} className="h-[2.7px] w-[2.7px] bg-[#a5a5a5]" />)}
          </div>
        </div>

        <div className="flex h-[562px] shrink-0">
          <section className="flex w-[605px] shrink-0 flex-col">
            <PanelHead name="Map" nw={26} box="ml-[4px] w-[141px]" arrow="w-[27px]" tgap="ml-[12px]" btnGap="mr-[13px]" iconGap="mr-[9px]" />
            <div className="h-[500px] shrink-0"><MapView /></div>
            <div className="flex h-[24px] shrink-0 items-center bg-gradient-to-b from-[#606060] to-[#484848] pt-[3px] text-[12px] text-[#ececec]">
              <span className="ml-[6px] h-[10px] w-[10px] bg-[#33b3ee]" />
              <Fit w={98} className="ml-[6px]">Selected Location</Fit>
              <span className="ml-[16px] h-[11px] w-[11px] rounded-full bg-[#33b3ee]" />
              <Fit w={78} className="ml-[6px]">Location head</Fit>
              <span className="ml-[16px] h-[10px] w-[21px] bg-[#33b3ee]" />
              <Fit w={122} className="ml-[6px]">Queue (at max length)</Fit>
              <span className="ml-[17px] h-[8px] w-[8px] rotate-45 bg-[#f11]" />
              <Fit w={109} className="ml-[6px]">Number of Incidents</Fit>
            </div>
          </section>

          <div className="flex w-[25px] shrink-0 items-center justify-center"><Grip /></div>

          <section className="flex w-[592px] shrink-0 flex-col bg-white">
            <PanelHead name="Time Spiral" nw={66} box="ml-[5px] w-[141px]" arrow="w-[28px]" tgap="ml-[12px]" btnGap="mr-[13px]" iconGap="mr-[9px]" />
            <Spiral />
            <div className="flex h-[41px] shrink-0 items-center px-[5px] pt-[12px] text-[13px] text-[#4c4c4c]">
              <Fit w={201} className="font-bold">Maximum queue length in miles</Fit>
              <span className="ml-[15px] h-[17px] w-[17px] rounded-[4px] border-2 border-[#777]" />
              <Fit w={60} className="ml-[10px]">Grayscale</Fit>
              <svg className="ml-auto mt-[3px] h-[15px] w-[15px]" viewBox="0 0 15 15"><path d="M7.500 1L14 7.500L7.500 14L1 7.500Z" fill="#fff200" stroke="#555" strokeWidth="1.300" /></svg>
              <Fit w={73} className="ml-[4px] mt-[2px] text-[#4cc0f0]"><u>Icon Legend</u></Fit>
            </div>
            <div className="mx-[5px] mt-[5px] flex h-[8px] shrink-0 overflow-hidden rounded-full border-[1.5px] border-[#3b4650]">
              <span className="flex-1 bg-[#0db3a4]" /><span className="flex-1 bg-[#1f7fcc]" /><span className="flex-1 bg-[#6f3398]" /><span className="flex-1 bg-[#a8236a]" />
            </div>
            <div className="flex justify-center gap-[121px]"><Marker n="2" fill="#1f7fcc" /><Marker n="5" fill="#6f3398" /><Marker n="8" fill="#a8236a" /></div>
          </section>

          <div className="flex w-[25px] shrink-0 items-center justify-center"><Grip /></div>

          <section className="flex w-[605px] shrink-0 flex-col bg-white">
            <PanelHead name="Elements Graph" nw={96} box="ml-[6px] w-[141px]" arrow="w-[27px]" tgap="ml-[10px]" btnGap="mr-[13px]" iconGap="mr-[10px]" />
            <Elements />
            <div className="flex h-[36px] shrink-0 items-end pb-[4px] pl-[11px] text-[13px] leading-[16px] text-[#555]">
              <span className="h-[14px] w-[14px] rounded-full bg-[#62c6f0]" />
              <Fit w={207} className="ml-[6px]">Selected Bottleneck Head Location</Fit>
            </div>
            <div className="flex h-[18px] shrink-0 items-start pl-[12px] text-[13px] leading-[14px] text-[#555]">
              <span className="h-[13px] w-[196px] border-2 border-[#ffc766] bg-gradient-to-r from-white to-[#ffb948]" />
              <Fit w={159} className="ml-[6px]">Number of days congested</Fit>
            </div>
          </section>
        </div>
      </main>

      <svg className="absolute left-[1994px] top-[1116px] h-[72px] w-[126px]" viewBox="0 0 126 72">
        <path d="M12 4H28Q39 6 39 18V41H28V17H14V54H38V60Q37 66 29 67H11Q2 65 2 56V16Q3 5 12 4Z" fill="#00569b" />
        <path fillRule="evenodd" d="M41 37V13Q42 6 50 6H54Q62 6 63 13V37H56V28H48V37ZM48 21H56V13H48Z" fill="#00569b" />
        <path d="M65 6H89V12H81V37H73V12H65ZM90 6H112V12H105V37H97V12H90Z" fill="#00569b" />
        <text x="40" y="54" textLength="81" lengthAdjust="spacingAndGlyphs" fontSize="15" fontWeight="700" fill="#fff" stroke="#6d9fc8" strokeWidth=".7">ABORATORY</text>
      </svg>
    </div>
  );
}
